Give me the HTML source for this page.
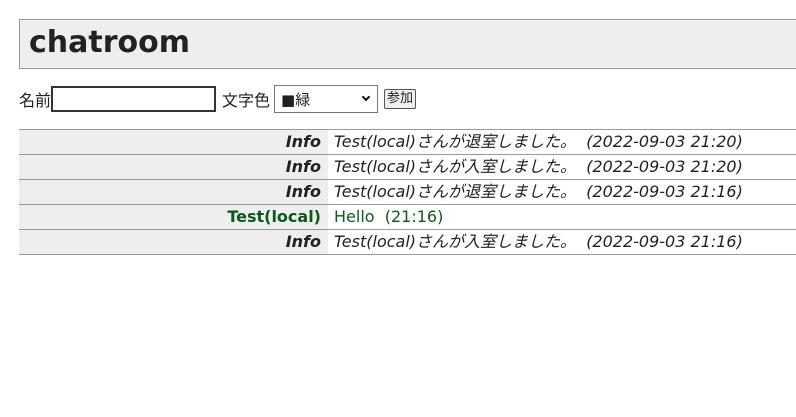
<!DOCTYPE html>
<html><head><meta charset="utf-8"><style>
body{margin:0;font-family:"DejaVu Sans","Noto Sans CJK JP",sans-serif;font-size:16px;color:#222;background:#fff;}
h1{position:absolute;left:19px;top:19px;width:790px;margin:0;background:#eee;border:1px solid #999;font-size:30px;font-weight:bold;line-height:46px;padding-left:9px;box-sizing:border-box;height:50px;}
.form{position:absolute;left:19px;top:85px;height:28px;display:flex;align-items:center;white-space:nowrap;}
.form input{width:165px;height:26px;box-sizing:border-box;border:2px solid #333;margin:0;}
.sel{margin-left:4px;width:104px;height:28px;border:1px solid #777;box-sizing:border-box;display:flex;align-items:center;padding-left:6px;font-size:15px;position:relative;background:#fff}
.sel:after{content:"";position:absolute;right:8px;top:8px;width:4px;height:4px;border-right:2px solid #111;border-bottom:2px solid #111;transform:rotate(45deg)}
.btn{margin-left:6px;border:1px solid #555;border-radius:2px;font-size:13px;padding:0 2px;height:18px;line-height:17px;background:#efefef}
table{position:absolute;left:19px;top:129px;width:777px;border-collapse:collapse;}
td{height:24px;border-top:1px solid #999;border-bottom:1px solid #999;padding:0;line-height:24px;white-space:nowrap}
td.n{width:302px;background:#eee;text-align:right;padding-right:7px;font-weight:bold;font-style:italic;}
td.m{padding-left:6px;font-style:italic;}
.g{color:#0a5a1a;font-style:normal!important}
</style></head><body>
<h1>chatroom</h1>
<div class="form">名前<input type="text"><span style="margin-left:6px">文字色</span><div class="sel">■緑</div><span class="btn">参加</span></div>
<table>
<tr><td class="n">Info</td><td class="m">Test(local)さんが退室しました。 &nbsp;(2022-09-03 21:20)</td></tr>
<tr><td class="n">Info</td><td class="m">Test(local)さんが入室しました。 &nbsp;(2022-09-03 21:20)</td></tr>
<tr><td class="n">Info</td><td class="m">Test(local)さんが退室しました。 &nbsp;(2022-09-03 21:16)</td></tr>
<tr><td class="n g">Test(local)</td><td class="m g">Hello&nbsp; (21:16)</td></tr>
<tr><td class="n">Info</td><td class="m">Test(local)さんが入室しました。 &nbsp;(2022-09-03 21:16)</td></tr>
</table>
</body></html>
